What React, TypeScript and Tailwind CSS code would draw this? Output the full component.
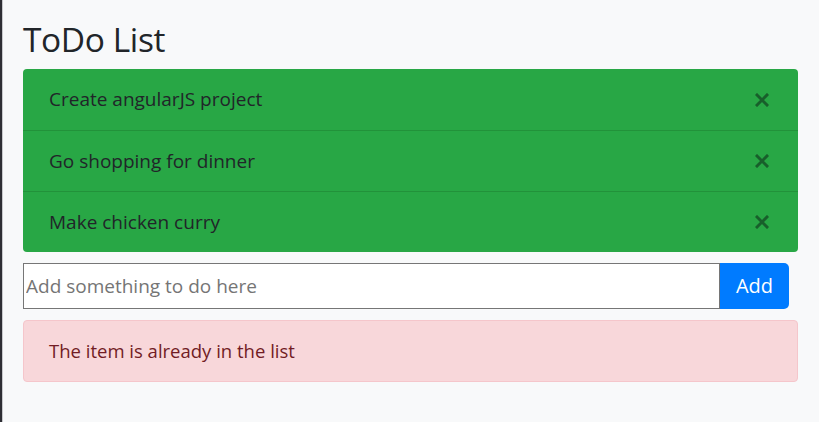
import React, { useState } from 'react';

const todos = ['Create angularJS project', 'Go shopping for dinner', 'Make chicken curry'];

function CloseIcon() {
  return (
    <svg width="14" height="14" viewBox="0 0 14 14" className="text-[#185f2b]">
      <path d="M2 2 L12 12 M12 2 L2 12" stroke="currentColor" strokeWidth="3" strokeLinecap="square" fill="none" />
    </svg>
  );
}

export default function App() {
  const [value, setValue] = useState('');

  return (
    <div className="h-[422px] w-[819px] overflow-hidden bg-[#2e2e34] pl-[2px]">
      <div
        className="h-full border-l border-[#c8c9cc] bg-[#f8f9fa] pl-[20px] pr-[20px] pt-[21px] text-[#212529]"
        style={{ fontFamily: '"Open Sans", "Noto Sans", sans-serif' }}
      >
        <h1 className="mb-[12px] text-[33.5px] leading-[36px] tracking-[-0.4px]">ToDo List</h1>

        <ul className="w-[775px] overflow-hidden rounded-[4px] bg-[#28a745]">
          {todos.map((t, i) => (
            <li
              key={t}
              className={
                'flex h-[61px] items-center justify-between pl-[26px] pr-[29px] text-[19px] ' +
                (i > 0 ? 'border-t border-[#22923a]' : '')
              }
            >
              <span>{t}</span>
              <CloseIcon />
            </li>
          ))}
        </ul>

        <div className="mt-[11px] flex h-[46px] w-[766px]">
          <input
            value={value}
            onChange={(e) => setValue(e.target.value)}
            placeholder="Add something to do here"
            className="h-full w-[697px] border border-[#767676] bg-white px-[2px] text-[19px] text-[#212529] outline-none placeholder:text-[#757575]"
          />
          <button className="h-full w-[69px] rounded-r-[5px] bg-[#007bff] text-[20px] text-white">Add</button>
        </div>

        <div className="mt-[11px] flex h-[62px] w-[775px] items-center rounded-[4px] border border-[#f5c6cb] bg-[#f8d7da] pl-[25px] text-[18.5px] text-[#721c24]">
          The item is already in the list
        </div>
      </div>
    </div>
  );
}
